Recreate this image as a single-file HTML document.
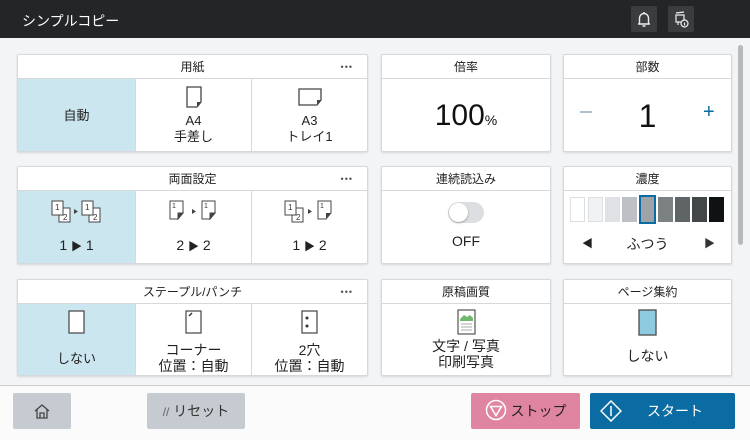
<!DOCTYPE html>
<html><head><meta charset="utf-8"><style>
*{margin:0;padding:0;box-sizing:border-box}
body{width:750px;height:440px;overflow:hidden;background:#f3f4f6;font-family:"Liberation Sans","Noto Sans CJK JP",sans-serif;color:#222;position:relative}
.abs{position:absolute}
.hdr{left:0;top:0;width:750px;height:38px;background:#232527;color:#fff;font-size:14px}
.card{position:absolute;background:#fff;border:1px solid #d6d8db;border-radius:2px;box-shadow:0 1px 2px rgba(0,0,0,.12)}
.ch{position:absolute;left:0;right:0;top:0;height:24px;border-bottom:1px solid #d6d8db;text-align:center;font-size:12px;line-height:24px}
.dots{position:absolute;right:14px;top:0;font-size:9px;letter-spacing:1px;color:#555}
.cell{position:absolute;top:24px;bottom:0;text-align:center;font-size:13px;line-height:16px}
.sel{background:#cbe6ef}
.vl{border-left:1px solid #d6d8db}
.btn{position:absolute;top:393px;height:36px;border-radius:2px;font-size:14px;text-align:center;line-height:36px}
.sw{position:absolute;top:197px;width:15px;height:25px;border:1px solid #dde0e3}
.ar{font-size:11px}
</style></head><body>
<div class="abs hdr"><span class="abs" style="left:22px;top:11px">シンプルコピー</span>
<div class="abs" style="left:631px;top:6px;width:26px;height:26px;background:#3a3c3f;border-radius:2px">
<svg width="26" height="26" viewBox="0 0 26 26"><path d="M7 18h12M8.5 18v-6a4.5 4.5 0 0 1 9 0v6" stroke="#eee" stroke-width="1.4" fill="none"/><path d="M13 6v1.5M11.5 20h3" stroke="#eee" stroke-width="1.4"/></svg></div>
<div class="abs" style="left:668px;top:6px;width:26px;height:26px;background:#3a3c3f;border-radius:2px">
<svg width="26" height="26" viewBox="0 0 26 26"><path d="M8 9h8v7h-8zM10 16v3M8 7l8-1" stroke="#eee" stroke-width="1.2" fill="none"/><circle cx="16.5" cy="17.5" r="3.5" fill="#3a3c3f" stroke="#eee" stroke-width="1.2"/><path d="M16.5 16.5v3" stroke="#eee" stroke-width="1.2"/></svg></div>
</div>
<div class="abs" style="left:738px;top:45px;width:5px;height:200px;background:#b7babd;border-radius:3px"></div>

<div class="card" style="left:17px;top:54px;width:351px;height:98px">
<div class="ch">用紙<span class="dots">•••</span></div>
<div class="cell sel" style="left:0;width:117px;line-height:74px">自動</div>
<div class="cell vl" style="left:117px;width:116px"><svg width="20" height="24" style="margin-top:6px"><path d="M3 2h14v15l-4 5H3z" fill="#fff" stroke="#444" stroke-width="1.3"/><path d="M13 22v-5h4z" fill="#444"/></svg><br>A4<br>手差し</div>
<div class="cell vl" style="left:233px;width:116px"><svg width="26" height="24" style="margin-top:6px"><path d="M2 4h22v11l-4 5H2z" fill="#fff" stroke="#444" stroke-width="1.3"/><path d="M20 20v-5h4z" fill="#444"/></svg><br>A3<br>トレイ1</div>
</div>
<div class="card" style="left:381px;top:54px;width:170px;height:98px">
<div class="ch">倍率</div>
<div class="cell" style="left:0;right:0;line-height:74px;font-size:30px;color:#111">100<span style="font-size:14px">%</span></div>
</div>
<div class="card" style="left:563px;top:54px;width:169px;height:98px">
<div class="ch">部数</div>
<div class="cell" style="left:0;right:0;line-height:74px;font-size:32px;color:#111">1</div>
<div class="abs" style="left:16px;top:56px;width:12px;height:1.5px;background:#a9c3cf"></div>
<div class="abs" style="left:139px;top:51px;font-size:20px;color:#0b6ba3;line-height:12px">+</div>
</div>

<div class="card" style="left:17px;top:166px;width:351px;height:98px">
<div class="ch">両面設定<span class="dots">•••</span></div>
<div class="cell sel" style="left:0;width:117px"><svg width="60" height="30" style="margin-top:6px"><g fill="#fff" stroke="#444" stroke-width="1"><rect x="12" y="11" width="11" height="14"/><rect x="5" y="4" width="11" height="14"/><rect x="42" y="11" width="11" height="14"/><rect x="35" y="4" width="11" height="14"/></g><g font-size="8" fill="#333" font-family="Liberation Sans"><text x="8" y="13">1</text><text x="16" y="23">2</text><text x="38" y="13">1</text><text x="46" y="23">2</text></g><path d="M27 12v5l4-2.5z" fill="#444"/></svg><div style="margin-top:6px;font-size:14px">1 <span class="ar">▶</span> 1</div></div>
<div class="cell vl" style="left:117px;width:116px"><svg width="60" height="30" style="margin-top:6px"><g stroke="#444" stroke-width="1"><path d="M6 4h13v12l-5 6H6z" fill="#fff"/><path d="M14 22v-6h5z" fill="#444"/><path d="M38 4h13v12l-5 6h-8z" fill="#fff"/><path d="M46 22v-6h5z" fill="#444"/></g><g font-size="7" fill="#333"><text x="8" y="11">1</text><text x="40" y="11">1</text></g><path d="M28 12v5l4-2.5z" fill="#444"/></svg><div style="margin-top:6px;font-size:14px">2 <span class="ar">▶</span> 2</div></div>
<div class="cell vl" style="left:233px;width:116px"><svg width="60" height="30" style="margin-top:6px"><g fill="#fff" stroke="#444" stroke-width="1"><rect x="12" y="11" width="11" height="14"/><rect x="5" y="4" width="11" height="14"/><path d="M38 4h13v12l-5 6h-8z"/></g><path d="M46 22v-6h5z" fill="#444"/><g font-size="8" fill="#333"><text x="8" y="13">1</text><text x="16" y="23">2</text><text x="40" y="11" font-size="7">1</text></g><path d="M28 12v5l4-2.5z" fill="#444"/></svg><div style="margin-top:6px;font-size:14px">1 <span class="ar">▶</span> 2</div></div>
</div>
<div class="card" style="left:381px;top:166px;width:170px;height:98px">
<div class="ch">連続読込み</div>
<div class="abs" style="left:66px;top:35px;width:36px;height:21px;border-radius:11px;background:#dcdee1"><div class="abs" style="left:1px;top:1px;width:19px;height:19px;border-radius:50%;background:#fff;box-shadow:0 1px 2px rgba(0,0,0,.3)"></div></div>
<div class="abs" style="left:0;right:0;top:66px;text-align:center;font-size:14px">OFF</div>
</div>
<div class="card" style="left:563px;top:166px;width:169px;height:98px">
<div class="ch">濃度</div>
<div class="abs" style="left:0;right:0;top:67px;text-align:center;font-size:14px">ふつう</div>
<div class="abs" style="left:18px;top:68px;font-size:11px">◀</div>
<div class="abs" style="left:140px;top:68px;font-size:11px;color:#333">▶</div>
</div>
<div class="sw" style="left:570px;background:#fff"></div>
<div class="sw" style="left:588px;background:#f1f2f4"></div>
<div class="sw" style="left:605px;background:#dfe1e4;border-color:#dfe1e4"></div>
<div class="sw" style="left:622px;background:#bdc0c4;border-color:#bdc0c4"></div>
<div class="sw" style="left:639px;top:195px;width:17px;height:29px;background:#9ea3a7;border:2px solid #0b6ba3"></div>
<div class="sw" style="left:658px;background:#7c8283;border-color:#7c8283"></div>
<div class="sw" style="left:675px;background:#5f6566;border-color:#5f6566"></div>
<div class="sw" style="left:692px;background:#434748;border-color:#434748"></div>
<div class="sw" style="left:709px;background:#0e1212;border-color:#0e1212"></div>

<div class="card" style="left:17px;top:279px;width:351px;height:97px">
<div class="ch">ステープル/パンチ<span class="dots">•••</span></div>
<div class="cell sel" style="left:0;width:117px"><svg width="20" height="26" style="margin-top:5px"><rect x="2" y="2" width="15" height="22" fill="#fff" stroke="#444" stroke-width="1.2"/></svg><div style="margin-top:12px">しない</div></div>
<div class="cell vl" style="left:117px;width:116px"><svg width="20" height="26" style="margin-top:5px"><rect x="2" y="2" width="15" height="22" fill="#fff" stroke="#444" stroke-width="1.2"/><path d="M5 7l3-3" stroke="#333" stroke-width="1.5"/></svg><div style="margin-top:3px;font-size:14px">コーナー<br>位置：自動</div></div>
<div class="cell vl" style="left:233px;width:116px"><svg width="20" height="26" style="margin-top:5px"><rect x="2" y="2" width="15" height="22" fill="#fff" stroke="#444" stroke-width="1.2"/><circle cx="7" cy="9" r="1.5" fill="#333"/><circle cx="7" cy="17" r="1.5" fill="#333"/></svg><div style="margin-top:3px;font-size:14px">2穴<br>位置：自動</div></div>
</div>
<div class="card" style="left:381px;top:279px;width:170px;height:97px">
<div class="ch">原稿画質</div>
<svg class="abs" style="left:75px;top:29px" width="20" height="26"><rect x="1" y="1" width="17" height="24" fill="#fff" stroke="#555" stroke-width="1.2"/><path d="M3 10l4-4 3 2 3-2 3 3v3H3z" fill="#6fb86f"/><g stroke="#aaa"><path d="M4 15h11M4 18h11M4 21h11"/></g></svg>
<div class="abs" style="left:0;right:0;top:58px;text-align:center;font-size:14px;line-height:16px">文字 / 写真<br>印刷写真</div>
</div>
<div class="card" style="left:563px;top:279px;width:169px;height:97px">
<div class="ch">ページ集約</div>
<svg class="abs" style="left:74px;top:29px" width="20" height="27"><rect x="1" y="1" width="17" height="25" fill="#8ecbe0" stroke="#555" stroke-width="1.4"/></svg>
<div class="abs" style="left:0;right:0;top:66px;text-align:center;font-size:14px">しない</div>
</div>

<div class="abs" style="left:0;top:385px;width:750px;height:55px;background:#fbfbfc;border-top:1px solid #c9ccd0"></div>
<div class="btn" style="left:13px;width:58px;background:#c6cbd1"><svg width="20" height="20" style="margin-top:8px"><path d="M3 10l7-6 7 6M5 8v9h10V8M8 17v-5h4v5" stroke="#444" stroke-width="1.3" fill="none"/></svg></div>
<div class="btn" style="left:147px;width:98px;background:#c6cbd1;color:#333"><span style="font-size:12px;color:#666">//</span> リセット</div>
<div class="btn" style="left:471px;width:109px;background:#e085a1;color:#222"><svg width="22" height="22" style="vertical-align:-5px;margin-right:4px"><circle cx="11" cy="11" r="9.5" fill="none" stroke="#fff" stroke-width="1.5"/><path d="M5.5 7.5h11L11 16.5z" fill="none" stroke="#fff" stroke-width="1.5"/></svg>ストップ</div>
<div class="btn" style="left:590px;width:145px;background:#0b6ba3;color:#fff"><svg class="abs" style="left:10px;top:7px" width="22" height="22"><path d="M11 1l10 10-10 10L1 11z" fill="none" stroke="#fff" stroke-width="1.5"/><path d="M11 6v10" stroke="#fff" stroke-width="1.5"/></svg><span style="margin-left:25px">スタート</span></div>
</body></html>
